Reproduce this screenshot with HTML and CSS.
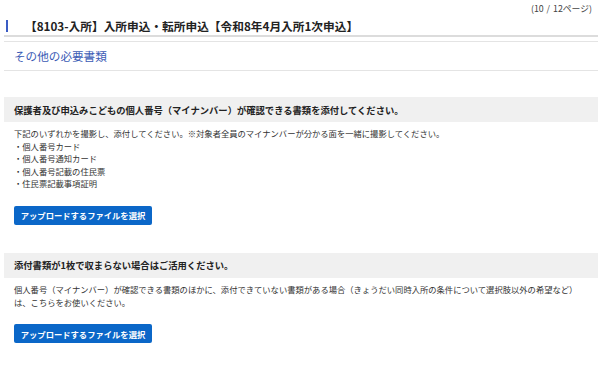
FILE: index.html
```html
<!DOCTYPE html>
<html lang="ja">
<head>
    <meta charset="UTF-8">
    <meta name="viewport" content="width=device-width, initial-scale=1.0">
    <title>入所申込・転所申込</title>
    <link rel="stylesheet" href="styles.css">
</head>
<body>
    <div class="page">
        <div class="page-count">(10 / 12ページ)</div>

        <h1 class="title"><span class="title-text">【8103-入所】入所申込・転所申込【令和8年4月入所1次申込】</span></h1>

        <h2 class="section-head">その他の必要書類</h2>

        <div class="doc-block">
            <h3 class="doc-head">保護者及び申込みこどもの個人番号（マイナンバー）が確認できる書類を添付してください。</h3>
            <div class="doc-body">
                <p>下記のいずれかを撮影し、添付してください。※対象者全員のマイナンバーが分かる面を一緒に撮影してください。</p>
                <p>・個人番号カード</p>
                <p>・個人番号通知カード</p>
                <p>・個人番号記載の住民票</p>
                <p>・住民票記載事項証明</p>
            </div>
            <button type="button" class="btn-upload">アップロードするファイルを選択</button>
        </div>

        <div class="doc-block">
            <h3 class="doc-head">添付書類が1枚で収まらない場合はご活用ください。</h3>
            <div class="doc-body">
                <p>個人番号（マイナンバー）が確認できる書類のほかに、添付できていない書類がある場合（きょうだい同時入所の条件について選択肢以外の希望など）</p>
                <p>は、こちらをお使いください。</p>
            </div>
            <button type="button" class="btn-upload">アップロードするファイルを選択</button>
        </div>
    </div>
</body>
</html>
```

FILE: styles.css
```css
:root {
    --text: #333333;
    --line: #dcdcdc;
    --blue-bar: #3a5cc4;
    --blue-text: #3b5bb5;
    --btn: #0b67c8;
    --gray-box: #f0f0f0;
}

* {
    margin: 0;
    padding: 0;
    box-sizing: border-box;
}

body {
    background: white;
    color: var(--text);
    font-family: "Noto Sans CJK JP", "Noto Sans", sans-serif;
}

.page {
    padding: 0 3px 0 4px;
}

.page-count {
    text-align: right;
    font-size: 8.8px;
    line-height: 14px;
    height: 16px;
    padding-top: 2px;
    padding-right: 6px;
    color: #444;
    word-spacing: 1px;
}

/* Title */
.title {
    display: flex;
    align-items: center;
    height: 21px;
    padding: 1px 0 0 2px;
    border-bottom: 2px solid var(--line);
    font-size: 11.7px;
    font-weight: bold;
    color: #222;
}

.title-text {
    display: block;
    border-left: 2px solid var(--blue-bar);
    padding-left: 17px;
    line-height: 12px;
}

.section-head {
    display: flex;
    align-items: center;
    margin-top: 4px;
    height: 30px;
    padding-left: 10px;
    border-top: 1px solid #e4e4e4;
    border-bottom: 1px solid #e4e4e4;
    font-size: 11.6px;
    font-weight: normal;
    color: var(--blue-text);
}

/* Document blocks */
.doc-block {
    margin-top: 26px;
}

.doc-block + .doc-block {
    margin-top: 28px;
}

.doc-head {
    display: flex;
    align-items: center;
    height: 25px;
    padding-left: 10px;
    background: var(--gray-box);
    font-size: 9.3px;
    font-weight: bold;
    color: #222;
}

.doc-body {
    padding: 5px 10px 0;
    font-size: 8.3px;
    line-height: 12.6px;
}

.btn-upload {
    display: block;
    margin: 16px 0 0 10px;
    height: 19px;
    width: 138px;
    background: var(--btn);
    color: white;
    border: none;
    border-radius: 2px;
    font-family: inherit;
    font-size: 8.3px;
    font-weight: bold;
    cursor: pointer;
}
```
